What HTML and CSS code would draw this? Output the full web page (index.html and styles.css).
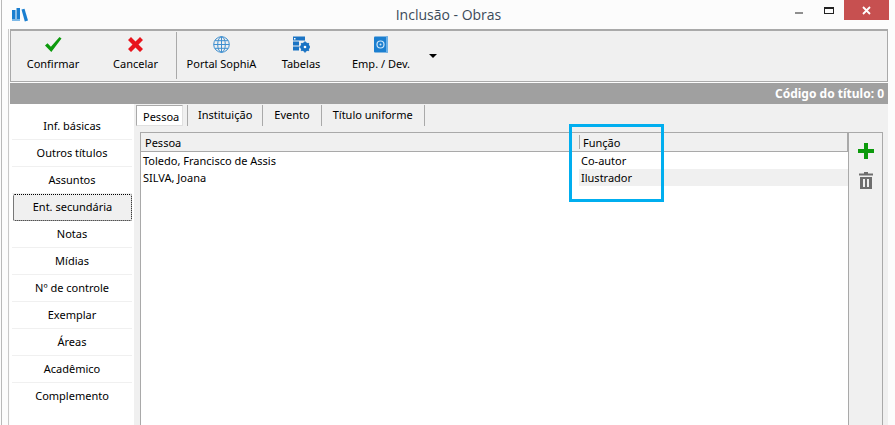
FILE: index.html
```html
<!DOCTYPE html>
<html lang="pt">
<head>
<meta charset="utf-8">
<title>Inclusão - Obras</title>
<link rel="stylesheet" href="styles.css">
</head>
<body>
<div class="window">
  <header class="titlebar">
    <svg class="app-icon" width="17" height="15" viewBox="0 0 17 15"><path fill="#1b7fd0" d="M0 3h3.500v11H0zM4.500 1H8v13H4.500z"/><path fill="#1b7fd0" d="M9.500 2.500l3-.8 3.500 11.800-3.200.9z"/><path fill="#7db9e8" d="M0 12h8v2H0z"/></svg>
    <div class="title">Inclusão - Obras</div>
    <div class="controls">
      <span class="ctl"><i class="min"></i></span>
      <span class="ctl"><i class="max"></i></span>
      <span class="close"><svg width="9" height="9" viewBox="0 0 9 9"><path d="M1 1l7 7M8 1L1 8" stroke="#fff" stroke-width="1.800"/></svg></span>
    </div>
  </header>
  <div class="frame">
    <nav class="toolbar">
      <button class="tool w-confirm">
        <svg width="17" height="17" viewBox="0 0 17 17"><path fill="#0c9a0c" d="M0 9.500l2.500-2.300 3.400 3.600L14.500 1l2 1.500L6.300 16z"/></svg>
        <span>Confirmar</span>
      </button>
      <button class="tool w-cancel">
        <svg width="15" height="15" viewBox="0 0 15 15"><path fill="#e8141c" d="M0 3l3-3 4.500 4.500L12 0l3 3-4.500 4.500L15 12l-3 3-4.500-4.500L3 15l-3-3 4.500-4.500z"/></svg>
        <span>Cancelar</span>
      </button>
      <div class="sep"></div>
      <button class="tool w-portal">
        <svg width="17" height="17" viewBox="0 0 17 17" fill="none" stroke="#3f8fcf"><circle cx="8.500" cy="8.500" r="7.800"/><ellipse cx="8.500" cy="8.500" rx="3.800" ry="7.800"/><path d="M8.500 .7v15.600M.7 8.500h15.600M1.800 4.700h13.400M1.800 12.300h13.400"/></svg>
        <span>Portal SophiA</span>
      </button>
      <button class="tool w-tabelas">
        <svg width="17" height="16" viewBox="0 0 17 16"><path fill="#1b74c4" d="M0 0h12v4H0zM0 5h6v4H0zM0 10h6v4H0z"/><path fill="#fff" d="M1 1.500h1.500V3H1z"/><circle cx="12" cy="10.500" r="3.400" fill="none" stroke="#1b74c4" stroke-width="2.600"/><path stroke="#1b74c4" stroke-width="1.600" d="M12 5v11M6.500 10.500h11M8.200 6.700l7.600 7.600M15.800 6.700l-7.600 7.600"/><circle cx="12" cy="10.500" r="1.300" fill="#fff"/></svg>
        <span>Tabelas</span>
      </button>
      <button class="tool w-emp">
        <svg width="14" height="16" viewBox="0 0 14 16"><path fill="#1b7fd0" d="M1 0h13v16H1a1 1 0 0 1-1-1V1a1 1 0 0 1 1-1z"/><path fill="#6db0e6" d="M12 0h2v16h-2z"/><circle cx="6.500" cy="8" r="3.500" fill="none" stroke="#cfe6f8" stroke-width="1.200"/><circle cx="6.500" cy="8" r="1" fill="#cfe6f8"/></svg>
        <span>Emp. / Dev.</span>
      </button>
      <i class="caret"></i>
    </nav>
    <div class="codebar">Código do título: 0</div>
    <div class="main">
      <aside class="sidebar">
        <a class="side">Inf. básicas</a>
        <a class="side">Outros títulos</a>
        <a class="side">Assuntos</a>
        <a class="side active">Ent. secundária</a>
        <a class="side">Notas</a>
        <a class="side">Mídias</a>
        <a class="side">Nº de controle</a>
        <a class="side">Exemplar</a>
        <a class="side">Áreas</a>
        <a class="side">Acadêmico</a>
        <a class="side last">Complemento</a>
      </aside>
      <section class="content">
        <div class="tabs">
          <span class="tab current">Pessoa</span>
          <span class="tab">Instituição</span>
          <span class="tab">Evento</span>
          <span class="tab">Título uniforme</span>
        </div>
        <div class="panel">
          <div class="grid">
            <div class="row head"><span class="c1">Pessoa</span><span class="c2">Função</span></div>
            <div class="row"><span class="c1">Toledo, Francisco de Assis</span><span class="c2">Co-autor</span></div>
            <div class="row alt"><span class="c1">SILVA, Joana</span><span class="c2 shade">Ilustrador</span></div>
          </div>
          <div class="actions">
            <svg width="16" height="16" viewBox="0 0 16 16"><path fill="#0c9a0c" d="M6 0h4v6h6v4h-6v6H6v-6H0V6h6z"/></svg>
            <svg width="14" height="17" viewBox="0 0 14 17"><path fill="#6e6e6e" d="M5 0h4v1.500h5V3.500H0V1.500h5zM1 5h12v12H1zM4 7v8h2V7zM8 7v8h2V7z" fill-rule="evenodd"/></svg>
          </div>
        </div>
      </section>
      <div class="highlight"></div>
    </div>
  </div>
</div>
</body>
</html>
```
FILE: styles.css
```css
* { box-sizing: border-box; }
html, body { margin: 0; height: 100%; overflow: hidden; background: #fcfcfc; }
body { font: 11px/13px "Noto Sans", "DejaVu Sans", sans-serif; color: #000; }
.window { width: 888px; height: 425px; margin-left: 1px; border-left: 1px solid #b9b9b9; background: #fcfcfc; display: flex; flex-direction: column; }
.titlebar { height: 29px; display: flex; position: relative; align-items: flex-start; padding-left: 10px; flex: none; }
.app-icon { margin-top: 7px; }
.title { position: absolute; left: 0; right: 0; top: 5px; text-align: center; font: 14px/20px "Open Sans", "Noto Sans", sans-serif; color: #3b4a59; padding-left: 6px; }
.controls { margin-left: auto; display: flex; position: relative; }
.ctl { width: 30px; height: 20px; display: flex; align-items: center; justify-content: center; }
.min { width: 8px; height: 2px; background: #8f8f8f; margin-top: 6px; }
.max { width: 10px; height: 7px; border: 1px solid #222; border-top-width: 2px; }
.close { width: 45px; height: 20px; background: #c75050; display: flex; align-items: center; justify-content: center; }
.frame { margin: 0 1px 0 6px; flex: 1; display: flex; flex-direction: column; border-left: 1px solid #c8c8c8; min-height: 0; }
.toolbar { margin-left: 1px; height: 53px; flex: none; background: #f0f0f0; border: 2px solid #a9a9a9; border-width: 1px 1px 1px 1px; box-shadow: inset 0 1px 0 #a9a9a9; display: flex; align-items: stretch; position: relative; }
.tool { border: 0; background: none; padding: 6px 0 0; font: inherit; color: #000; display: flex; flex-direction: column; align-items: center; gap: 4px; flex: none; }
.tool svg { height: 17px; }
.w-confirm { width: 84px; }
.w-cancel { width: 81px; }
.sep { width: 1px; margin: 2px 0 2px 0; background: #a9a9a9; }
.w-portal { width: 89px; }
.w-tabelas { width: 70px; }
.w-emp { width: 90px; }
.caret { width: 0; height: 0; margin-top: 24px; margin-left: 3px; border: 4px solid transparent; border-top: 4px solid #000; border-bottom: 0; }
.codebar { margin-left: 1px; flex: none; height: 21px; background: #a0a0a0; color: #fff; font: 700 12px/21px "Noto Sans", sans-serif; text-align: right; padding-right: 4px; margin-top: 1px; }
.main { flex: 1; display: flex; min-height: 0; position: relative; background: #f0f0f0; margin-left: 1px; }
.sidebar { width: 124px; flex: none; background: #fff; padding: 9px 2px 0; display: flex; flex-direction: column; }
.side { height: 27px; flex: none; line-height: 26px; text-align: center; border-bottom: 1px solid #f0f0f0; }
.side.last { border-bottom: 0; }
.side.active { background: #f0f0f0; outline: 1px dotted #000; outline-offset: -1px; border-bottom: 0; margin: 0 0 0 1px; border-radius: 2px; }
.content { flex: 1; padding: 1px 5px 0 6px; display: flex; flex-direction: column; min-width: 0; }
.tabs { display: flex; height: 21px; flex: none; }
.tab { padding: 0 11px; line-height: 19px; border-right: 1px solid #a9a9a9; height: 21px; }
.tab.current { background: #fff; border: 1px solid #a9a9a9; border-right-color: #e0e0e0; border-bottom-color: #e0e0e0; padding: 2px 6px 0; line-height: 17px; margin: 0 0 0 -4px; width: 47px; margin-right: 4px; }
.tab:nth-child(2) { padding: 0 10px 0 10px; border-left: 1px solid #a9a9a9; }
.panel { margin-top: 6px; flex: 1; display: flex; min-height: 0; }
.grid { flex: 1; background: #fff; border-left: 1px solid #a9a9a9; border-top: 1px solid #a9a9a9; }
.row { display: flex; height: 17px; line-height: 17px; }
.row.head { height: 19px; line-height: 19px; background: #f0f0f0; border-bottom: 1px solid #a9a9a9; border-right: 1px solid #a9a9a9; }
.c1 { width: 438px; padding-left: 2px; flex: none; }
.c2 { flex: 1; padding-left: 2px; }
.row.head .c1 { padding-left: 4px; }
.row.head .c2 { border-left: 1px solid #a9a9a9; margin: 2px 0; line-height: 15px; padding-left: 3px; }
.shade { background: #f0f0f0; }
.actions { width: 35px; flex: none; border: 1px solid #a9a9a9; border-bottom: 0; padding-top: 10px; display: flex; flex-direction: column; align-items: center; gap: 13px; }
.highlight { position: absolute; left: 559px; top: 20px; width: 95px; height: 78px; border: 3px solid #00aeef; }
```
